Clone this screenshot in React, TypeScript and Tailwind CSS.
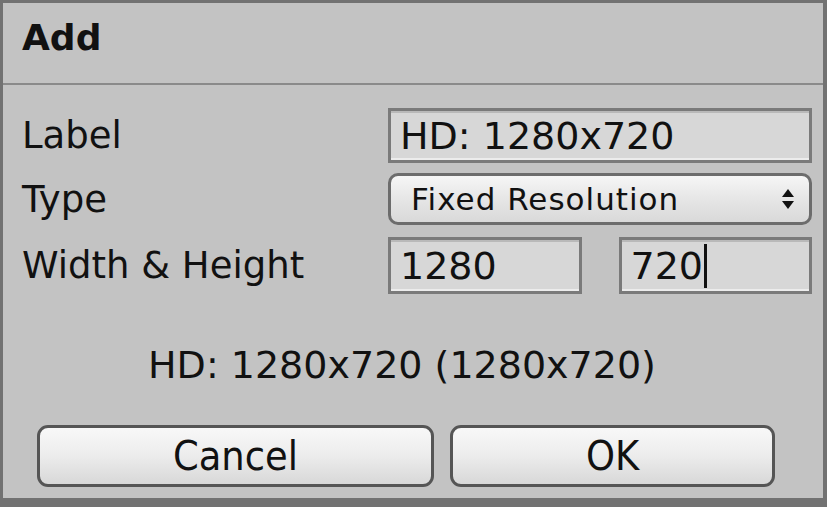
import React from "react";

const font = { fontFamily: '"DejaVu Sans", "Liberation Sans", sans-serif' };

const Field = ({ value, caret, className }: { value: string; caret?: boolean; className?: string }) => {
  return (
    <div
      className={`flex items-center border-[3px] border-[#7a7a7a] bg-[#d7d7d7] pl-[9px] shadow-[inset_0_2px_0_#b9b9b9,inset_0_-2px_0_#ececec] ${className ?? ""}`}
    >
      <span className="text-[38px] leading-none text-[#111]">{value}</span>
      {caret && <span className="ml-[1px] inline-block h-[44px] w-[3px] bg-[#111]"></span>}
    </div>
  );
};

const SelectBox = () => {
  return (
    <div className="flex h-[52px] items-center justify-between rounded-[10px] border-[3px] border-[#6c6c6c] bg-gradient-to-b from-[#f6f6f6] via-[#e6e6e6] to-[#d9d9d9] pl-[20px] pr-[14px]">
      <span className="text-[31px] leading-none tracking-[1px] text-[#111]">Fixed Resolution</span>
      <svg width="14" height="22" viewBox="0 0 14 22">
        <path d="M7 1 L13 9 L1 9 Z" fill="#111" />
        <path d="M7 21 L13 13 L1 13 Z" fill="#111" />
      </svg>
    </div>
  );
};

const Button = ({ label, className }: { label: string; className?: string }) => {
  return (
    <div
      className={`flex h-[62px] items-center justify-center rounded-[11px] border-[3px] border-[#555] bg-gradient-to-b from-[#f8f8f8] via-[#ececec] to-[#d8d8d8] ${className ?? ""}`}
    >
      <span
        className="text-[41px] leading-none text-[#111]"
        style={{ fontFamily: '"DejaVu Sans Condensed", "DejaVu Sans", sans-serif', fontStretch: "condensed" }}
      >
        {label}
      </span>
    </div>
  );
};

export default function App() {
  return (
    <div
      className="h-[507px] w-[827px] overflow-hidden border-b-[9px] border-l-[3px] border-r-[4px] border-t-[3px] border-[#727272] bg-[#c3c3c3]"
      style={font}
    >
      <div className="flex h-[80px] items-start pl-[19px] pt-[17px]">
        <span className="text-[36px] font-bold leading-none text-[#111]">Add</span>
      </div>
      <div className="h-[2px] bg-[#8a8a8a]"></div>

      <div className="flex flex-col pl-[19px] pr-[11px] pt-[23px]">
        <div className="flex h-[55px] items-center">
          <span className="w-[366px] text-[37px] leading-none text-[#111]">Label</span>
          <Field value="HD: 1280x720" className="h-[55px] flex-1" />
        </div>
        <div className="mt-[10px] flex items-center">
          <span className="w-[366px] text-[37px] leading-none text-[#111]">Type</span>
          <div className="flex-1">
            <SelectBox />
          </div>
        </div>
        <div className="mt-[12px] flex h-[57px] items-center">
          <span className="w-[366px] text-[37px] leading-none text-[#111]">Width &amp; Height</span>
          <div className="flex flex-1 gap-[37px]">
            <Field value="1280" className="h-[57px] flex-1" />
            <Field value="720" caret className="h-[57px] flex-1" />
          </div>
        </div>

        <div className="ml-[15px] w-[738px]">
          <div className="mt-[49px] pr-[8px] text-center text-[38px] leading-[44px] text-[#111]">
            HD: 1280x720 (1280x720)
          </div>
          <div className="mt-[38px] flex gap-[16px]">
            <Button label="Cancel" className="w-[397px]" />
            <Button label="OK" className="w-[325px]" />
          </div>
        </div>
      </div>
    </div>
  );
}
